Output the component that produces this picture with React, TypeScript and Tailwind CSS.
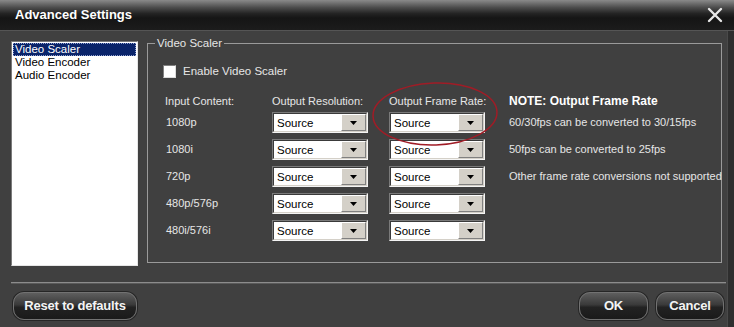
import React from 'react';

const ROWS = [
  { label: '1080p', note: '60/30fps can be converted to 30/15fps' },
  { label: '1080i', note: '50fps can be converted to 25fps' },
  { label: '720p', note: 'Other frame rate conversions not supported' },
  { label: '480p/576p', note: '' },
  { label: '480i/576i', note: '' },
];

// classic win32 combo box
function Combo({ value }: { value: string }) {
  return (
    <div className="w-[96px] h-[21px] border border-t-[#7a7a7a] border-l-[#7a7a7a] border-b-[#f4f4f4] border-r-[#f4f4f4]">
      <div className="h-full flex bg-white border border-t-[#3a3a3a] border-l-[#3a3a3a] border-b-[#d4d0c8] border-r-[#d4d0c8]">
        <div className="flex-1 pl-[3px] text-[11.5px] leading-[18px] text-black">{value}</div>
        <div className="w-[25px] h-full flex items-center justify-center bg-[#d4d0c8] border border-t-white border-l-white border-b-[#808080] border-r-[#808080]">
          <svg width="7" height="4" viewBox="0 0 7 4">
            <path d="M0 0h7L3.5 4z" fill="#000" />
          </svg>
        </div>
      </div>
    </div>
  );
}

function DarkButton({ label, w }: { label: string; w: string }) {
  return (
    <button
      className={`${w} h-[28px] rounded-[11px] border border-[#727272] bg-[linear-gradient(to_bottom,#5e5e5e_0%,#3a3a3a_45%,#222_55%,#1a1a1a_100%)] shadow-[0_0_0_1px_#262626] text-[#f4f4f4] text-[13px] font-bold tracking-[-0.2px]`}
    >
      {label}
    </button>
  );
}

export default function App() {
  return (
    <div className="relative w-[734px] h-[327px] bg-[#404040] flex flex-col overflow-hidden font-['Liberation_Sans',Arial,sans-serif]">
      {/* title bar */}
      <div className="h-[31px] shrink-0 flex items-center justify-between pl-[15px] pr-[11px] border-b border-[#555] bg-[linear-gradient(to_bottom,#8a8a8a_0%,#4c4c4c_25%,#242424_45%,#151515_60%,#1c1c1c_100%)]">
        <span className="text-white text-[13px] font-bold">Advanced Settings</span>
        <svg width="16" height="16" viewBox="0 0 16 16">
          <path d="M2 2L14 14M14 2L2 14" stroke="#e8e8e8" strokeWidth="2.4" strokeLinecap="round" />
        </svg>
      </div>

      <div className="flex-1 flex">
        <div className="w-[727px] shrink-0 flex flex-col">
          {/* body */}
          <div className="h-[251px] flex items-start pl-[11px] pt-[6px]">
            <div className="shrink-0 mt-[4px] w-[127px] h-[225px] bg-white border border-t-[#7a7a7a] border-l-[#7a7a7a] border-b-[#e6e6e6] border-r-[#e6e6e6] p-[1px] text-[11.5px] leading-[13px] text-black">
              <div className="bg-[#0a246a] text-white pl-[2px] outline-1 outline-dotted outline-[#8fa0d0] -outline-offset-1">Video Scaler</div>
              <div className="pl-[2px]">Video Encoder</div>
              <div className="pl-[2px]">Audio Encoder</div>
            </div>

            <fieldset className="shrink-0 min-w-0 ml-[9px] w-[575px] h-[226px] border border-[#9a9a9a] p-0 text-[11px] text-[#e6e6e6]">
              <legend className="ml-[7px] px-[2px] leading-[12px] text-[11.5px]">Video Scaler</legend>

              <label className="mt-[16px] ml-[15px] flex items-center gap-[7px] h-[13px]">
                <span className="w-[13px] h-[13px] bg-white border border-t-[#808080] border-l-[#808080] border-b-[#dcdcdc] border-r-[#dcdcdc]" />
                <span className="leading-[13px] text-[11.5px]">Enable Video Scaler</span>
              </label>

              <div className="mt-[17px] pl-[17px] grid grid-cols-[107px_117px_120px_1fr] leading-[13px]">
                <span>Input Content:</span>
                <span>Output Resolution:</span>
                <span>Output Frame Rate:</span>
                <span className="font-bold text-white text-[12px]">NOTE: Output Frame Rate</span>
              </div>

              <div className="mt-[4px] pl-[17px] flex flex-col gap-[6px]">
                {ROWS.map((r) => (
                  <div key={r.label} className="grid grid-cols-[107px_117px_120px_1fr] items-center">
                    <span className="pl-[1px]">{r.label}</span>
                    <Combo value="Source" />
                    <Combo value="Source" />
                    <span className="whitespace-nowrap">{r.note}</span>
                  </div>
                ))}
              </div>
            </fieldset>
          </div>

          {/* separator */}
          <div className="ml-[11px] mr-[1px] h-[2px] bg-[#8c8c8c] border-b border-[#5a5a5a]" />

          {/* footer */}
          <div className="flex items-start justify-between pt-[8px] pl-[13px] pr-[3px]">
            <DarkButton label="Reset to defaults" w="w-[124px]" />
            <div className="flex gap-[8px]">
              <DarkButton label="OK" w="w-[69px]" />
              <DarkButton label="Cancel" w="w-[68px]" />
            </div>
          </div>
        </div>
        <div className="flex-1 bg-[#2e2e2e] border-l border-[#4a4a4a]" />
      </div>

      {/* hand drawn highlight */}
      <svg className="absolute left-[369px] top-[80px] pointer-events-none" width="134" height="70" viewBox="0 0 134 70">
        <ellipse cx="66" cy="34" rx="62" ry="31" fill="none" stroke="#a01c26" strokeWidth="1.5" transform="rotate(-2 66 34)" />
      </svg>
    </div>
  );
}
